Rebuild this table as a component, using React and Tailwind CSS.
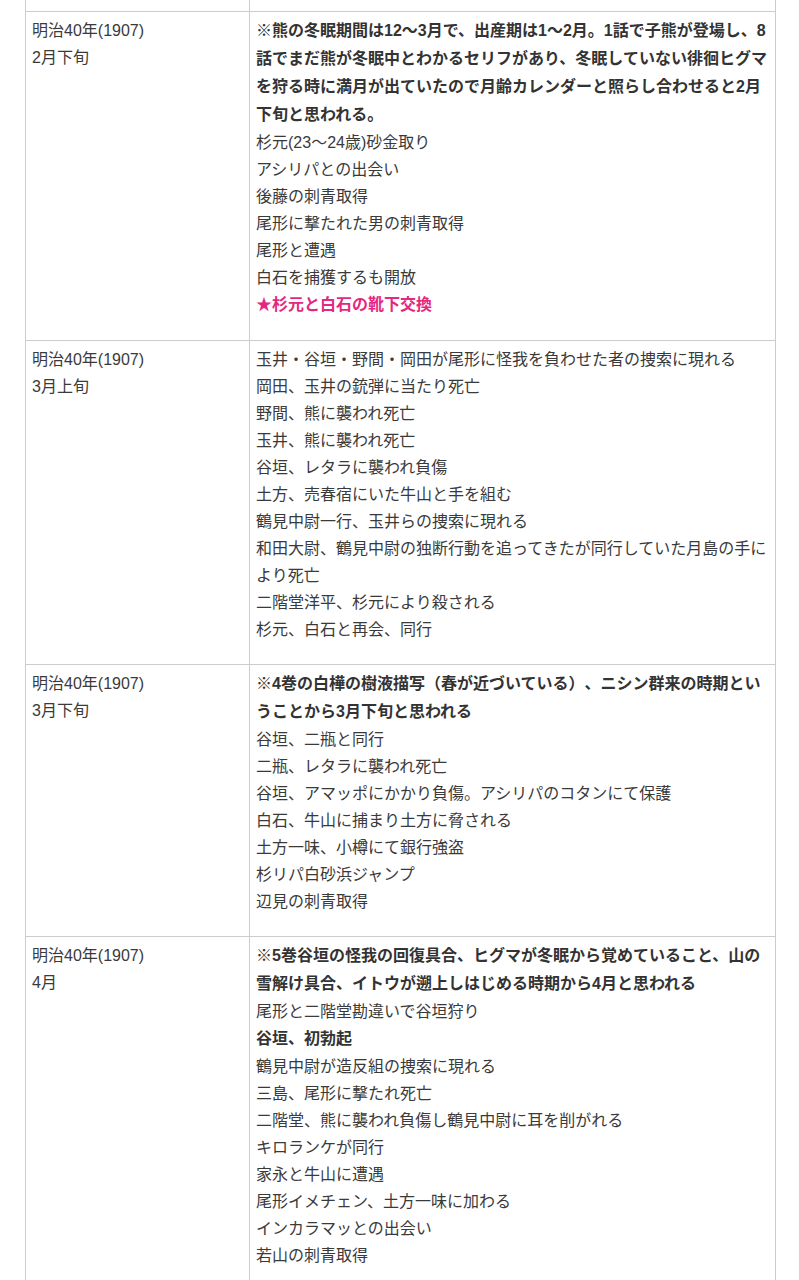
import React from 'react';

const rows = [
    {
        date: '明治40年(1907)',
        period: '2月下旬',
        items: [
            { text: '※熊の冬眠期間は12〜3月で、出産期は1〜2月。1話で子熊が登場し、8話でまだ熊が冬眠中とわかるセリフがあり、冬眠していない徘徊ヒグマを狩る時に満月が出ていたので月齢カレンダーと照らし合わせると2月下旬と思われる。', bold: true },
            { text: '杉元(23〜24歳)砂金取り' },
            { text: 'アシリパとの出会い' },
            { text: '後藤の刺青取得' },
            { text: '尾形に撃たれた男の刺青取得' },
            { text: '尾形と遭遇' },
            { text: '白石を捕獲するも開放' },
            { text: '★杉元と白石の靴下交換', bold: true, pink: true },
        ],
    },
    {
        date: '明治40年(1907)',
        period: '3月上旬',
        items: [
            { text: '玉井・谷垣・野間・岡田が尾形に怪我を負わせた者の捜索に現れる' },
            { text: '岡田、玉井の銃弾に当たり死亡' },
            { text: '野間、熊に襲われ死亡' },
            { text: '玉井、熊に襲われ死亡' },
            { text: '谷垣、レタラに襲われ負傷' },
            { text: '土方、売春宿にいた牛山と手を組む' },
            { text: '鶴見中尉一行、玉井らの捜索に現れる' },
            { text: '和田大尉、鶴見中尉の独断行動を追ってきたが同行していた月島の手により死亡' },
            { text: '二階堂洋平、杉元により殺される' },
            { text: '杉元、白石と再会、同行' },
        ],
    },
    {
        date: '明治40年(1907)',
        period: '3月下旬',
        items: [
            { text: '※4巻の白樺の樹液描写（春が近づいている）、ニシン群来の時期ということから3月下旬と思われる', bold: true },
            { text: '谷垣、二瓶と同行' },
            { text: '二瓶、レタラに襲われ死亡' },
            { text: '谷垣、アマッポにかかり負傷。アシリパのコタンにて保護' },
            { text: '白石、牛山に捕まり土方に脅される' },
            { text: '土方一味、小樽にて銀行強盗' },
            { text: '杉リパ白砂浜ジャンプ' },
            { text: '辺見の刺青取得' },
        ],
    },
    {
        date: '明治40年(1907)',
        period: '4月',
        items: [
            { text: '※5巻谷垣の怪我の回復具合、ヒグマが冬眠から覚めていること、山の雪解け具合、イトウが遡上しはじめる時期から4月と思われる', bold: true },
            { text: '尾形と二階堂勘違いで谷垣狩り' },
            { text: '谷垣、初勃起', bold: true },
            { text: '鶴見中尉が造反組の捜索に現れる' },
            { text: '三島、尾形に撃たれ死亡' },
            { text: '二階堂、熊に襲われ負傷し鶴見中尉に耳を削がれる' },
            { text: 'キロランケが同行' },
            { text: '家永と牛山に遭遇' },
            { text: '尾形イメチェン、土方一味に加わる' },
            { text: 'インカラマッとの出会い' },
            { text: '若山の刺青取得' },
        ],
    },
];

const Item = ({ item }) => {
    if (item.bold) {
        return (
            <p className={`font-bold leading-[28px] ${item.pink ? 'text-[#e5287f]' : 'text-[#333]'}`}>
                {item.text}
            </p>
        );
    }
    return <p className="leading-[27px] text-[#3a3a3a]">{item.text}</p>;
};

export default function App() {
    return (
        <div
            className="min-h-screen bg-white px-[25px] text-[16px] [text-spacing-trim:space-all]"
            style={{ fontFamily: '"Liberation Sans", "Noto Sans CJK JP", sans-serif' }}
        >
            <table className="w-[750px] table-fixed border-collapse">
                <colgroup>
                    <col className="w-[224px]" />
                    <col className="w-[526px]" />
                </colgroup>
                <tbody>
                    {/* tail of the row above */}
                    <tr>
                        <td className="h-[11px] border-x border-b border-[#cccccc] p-0"></td>
                        <td className="h-[11px] border-x border-b border-[#cccccc] p-0"></td>
                    </tr>
                    {rows.map((row, i) => (
                        <tr key={i}>
                            <td className="border border-[#cccccc] pt-[5px] pb-[21px] px-[6px] align-top text-[#3a3a3a]">
                                <p className="leading-[27px]">{row.date}</p>
                                <p className="leading-[27px]">{row.period}</p>
                            </td>
                            <td className="border border-[#cccccc] pt-[5px] pb-[21px] pl-[6px] pr-[4px] align-top">
                                {row.items.map((item, j) => (
                                    <Item key={j} item={item} />
                                ))}
                            </td>
                        </tr>
                    ))}
                </tbody>
            </table>
        </div>
    );
}
